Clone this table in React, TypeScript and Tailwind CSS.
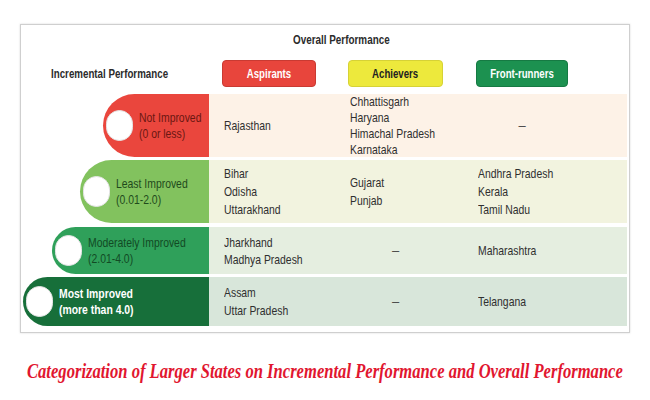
const sans = { fontFamily: '"Liberation Sans", Arial, sans-serif' };

type Cell = string[] | "-";

const rows: {
  label: string;
  range: string;
  tab: string;
  tabW: string;
  labelColor: string;
  bg: string;
  h: string;
  cells: Cell[];
  leading: string;
}[] = [
  {
    label: "Not Improved",
    range: "(0 or less)",
    tab: "bg-[#ea463d]",
    tabW: "w-[106px]",
    labelColor: "text-[#6b1712]",
    bg: "bg-[#fdf2e7]",
    h: "h-[63px]",
    cells: [["Rajasthan"], ["Chhattisgarh", "Haryana", "Himachal Pradesh", "Karnataka"], "-"],
    leading: "leading-[16px]",
  },
  {
    label: "Least Improved",
    range: "(0.01-2.0)",
    tab: "bg-[#82c25e]",
    tabW: "w-[129px]",
    labelColor: "text-[#1f4a1c]",
    bg: "bg-[#f2f3df]",
    h: "h-[63px]",
    cells: [["Bihar", "Odisha", "Uttarakhand"], ["Gujarat", "Punjab"], ["Andhra Pradesh", "Kerala", "Tamil Nadu"]],
    leading: "leading-[18px]",
  },
  {
    label: "Moderately Improved",
    range: "(2.01-4.0)",
    tab: "bg-[#2fa05a]",
    tabW: "w-[157px]",
    labelColor: "text-[#124a24]",
    bg: "bg-[#e5eee0]",
    h: "h-[47px]",
    cells: [["Jharkhand", "Madhya Pradesh"], "-", ["Maharashtra"]],
    leading: "leading-[17px]",
  },
  {
    label: "Most Improved",
    range: "(more than 4.0)",
    tab: "bg-[#176f3a]",
    tabW: "w-[186px]",
    labelColor: "text-white",
    bg: "bg-[#d8e6da]",
    h: "h-[49px]",
    cells: [["Assam", "Uttar Pradesh"], "-", ["Telangana"]],
    leading: "leading-[18px]",
  },
];

const pills = [
  { name: "Aspirants", cls: "w-[94px] bg-[#e8453c] border-[#c93a32] text-white" },
  { name: "Achievers", cls: "w-[95px] bg-[#ede93c] border-[#d6d236] text-[#222]" },
  { name: "Front-runners", cls: "w-[92px] bg-[#1c9150] border-[#167a43] text-white" },
];

const dashW = ["w-[94px]", "w-[95px]", "w-[92px]"];

export default function App() {
  return (
    <div className="w-[650px] h-[400px] overflow-hidden bg-white pt-6 pl-5" style={sans}>
      <div className="w-[610px] h-[309px] border border-[#cfcfcf] shadow-[0_0_2px_rgba(0,0,0,0.15)] bg-white">
        <div className="mt-[7px] h-4 pl-[272px] text-[13px] leading-4 font-bold text-[#2b2b2b] whitespace-nowrap">
          <span className="inline-block origin-left scale-x-[0.76]">Overall Performance</span>
        </div>

        {/* header */}
        <div className="mt-3 flex h-[27px]">
          <div className="w-[188px] flex items-center pl-[30px] text-[13px] font-bold text-[#2b2b2b] whitespace-nowrap">
            <span className="inline-block origin-left scale-x-[0.75]">Incremental Performance</span>
          </div>
          <div className="grid grid-cols-[126px_128px_1fr]">
            {pills.map((p) => (
              <div key={p.name} className="pl-[13px]">
                <div
                  className={`h-[27px] rounded-[4px] border flex items-center justify-center text-[13px] font-bold whitespace-nowrap ${p.cls}`}
                >
                  <span className="inline-block scale-x-[0.74]">{p.name}</span>
                </div>
              </div>
            ))}
          </div>
        </div>

        {/* rows */}
        <div className="mt-[7px] flex flex-col gap-[3px]">
          {rows.map((r, i) => (
            <div key={r.label} className={`flex ${r.h} ${i === 2 ? "mt-px" : ""}`}>
              <div className="w-[188px] flex justify-end">
                <div className={`${r.tabW} ${r.tab} h-full rounded-l-full flex items-center pl-[3px] gap-[6px]`}>
                  <div className="w-[27px] h-[31px] rounded-full bg-white border border-[#e4e4e4] shrink-0" />
                  <div
                    className={`text-[13px] leading-[16px] whitespace-nowrap origin-left scale-x-[0.8] ${r.labelColor} ${
                      i === 3 ? "font-bold" : ""
                    }`}
                  >
                    <div>{r.label}</div>
                    <div>{r.range}</div>
                  </div>
                </div>
              </div>
              <div className={`flex-1 mr-[2px] ${r.bg} grid grid-cols-[126px_128px_1fr] items-center`}>
                {r.cells.map((c, j) =>
                  c === "-" ? (
                    <div key={j} className="pl-[13px]">
                      <div className={`${dashW[j]} text-center text-[13px] text-[#444]`}>–</div>
                    </div>
                  ) : (
                    <div key={j} className="pl-[15px]">
                      <div
                        className={`text-[13px] text-[#2f2f2f] whitespace-nowrap origin-left scale-x-[0.8] ${r.leading}`}
                      >
                        {c.map((s) => (
                          <div key={s}>{s}</div>
                        ))}
                      </div>
                    </div>
                  )
                )}
              </div>
            </div>
          ))}
        </div>
      </div>

      <div
        className="mt-[26px] -ml-5 pl-[27px] text-[21px] leading-6 font-bold italic text-[#e1162f] whitespace-nowrap overflow-hidden"
        style={{ fontFamily: '"Liberation Serif", "Times New Roman", serif' }}
      >
        <span className="inline-block origin-left scale-x-[0.79]">
          Categorization of Larger States on Incremental Performance and Overall Performance
        </span>
      </div>
    </div>
  );
}
